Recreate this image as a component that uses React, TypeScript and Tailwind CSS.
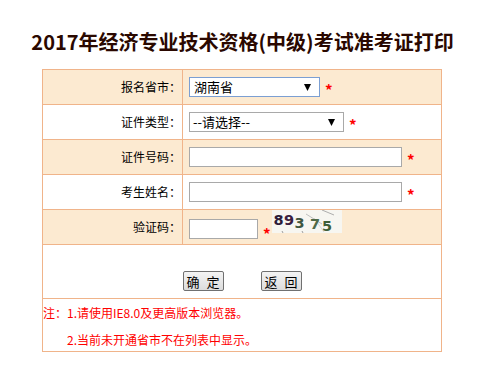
import React from "react";

const Star = ({ cls = "" }: { cls?: string }) => (
  <span className={`text-[#ff0000] text-[15px] font-bold leading-none ${cls}`}>*</span>
);

const Arrow = () => (
  <svg width="7" height="7" viewBox="0 0 7 7" className="absolute right-[8px] top-[6px]">
    <polygon points="0,0 7,0 3.5,7" fill="#000" />
  </svg>
);

const Captcha = () => (
  <svg width="70" height="23" viewBox="0 0 70 23" className="block">
    <rect width="70" height="23" fill="#f7f6f1" />
    <line x1="50" y1="0" x2="62" y2="5" stroke="#9a9a9a" strokeWidth="0.8" />
    <line x1="34" y1="4" x2="50" y2="14" stroke="#b0b0b0" strokeWidth="0.8" />
    <line x1="42" y1="8" x2="52" y2="22" stroke="#c4c4c4" strokeWidth="0.6" />
    <line x1="10" y1="21" x2="11" y2="23" stroke="#888" strokeWidth="0.8" />
    <line x1="30" y1="21" x2="31" y2="23" stroke="#888" strokeWidth="0.8" />
    <g fontFamily="'DejaVu Sans', sans-serif" fontWeight="bold" fontSize="14.5">
      <text x="1.5" y="15" fill="#2d1d3a">8</text>
      <text x="12" y="15" fill="#3a2040">9</text>
      <text x="22.5" y="18" fill="#3f5540">3</text>
      <text x="38" y="19" fill="#4f6a48">7</text>
      <text x="50" y="20.5" fill="#3e5e38">5</text>
    </g>
  </svg>
);

function Row({
  label,
  peach,
  children,
}: {
  label: string;
  peach?: boolean;
  children: React.ReactNode;
}) {
  return (
    <div
      className={`grid grid-cols-[140px_1fr] h-[35px] border-b border-[#f0b48a] ${
        peach ? "bg-[#fcead1]" : "bg-white"
      }`}
    >
      <div className="border-r border-[#f0b48a] flex items-center justify-end pr-[1px] text-[12px] text-black">
        {label}
      </div>
      <div className="flex items-center pl-[6px]">{children}</div>
    </div>
  );
}

export default function App() {
  return (
    <div className="w-[497px] h-[372px] bg-white font-['Noto_Sans_CJK_SC',sans-serif] overflow-hidden">
      <h1 className="w-[485px] mt-[28px] h-[28px] leading-[28px] text-[20px] font-bold text-[#2a0800] text-center">
        2017年经济专业技术资格(中级)考试准考证打印
      </h1>
      <div className="mt-[13px] ml-[42px] w-[400px] border border-[#f0b48a]">
        <Row label="报名省市：" peach>
          <div className="relative w-[131px] h-[20px] border border-[#7b9fd3] bg-white flex items-center pl-[4px] text-[13px] text-black">
            湖南省
            <Arrow />
          </div>
          <Star cls="ml-[5px] mt-[5px]" />
        </Row>
        <Row label="证件类型：">
          <div className="relative w-[155px] h-[20px] border border-[#a9a9a9] bg-white flex items-center pl-[3px] text-[13px] text-black">
            --请选择--
            <Arrow />
          </div>
          <Star cls="ml-[5px] mt-[5px]" />
        </Row>
        <Row label="证件号码：" peach>
          <input className="w-[213px] h-[20px] border border-[#a9a9a9] bg-white outline-none" />
          <Star cls="ml-[5px] mt-[5px]" />
        </Row>
        <Row label="考生姓名：">
          <input className="w-[213px] h-[20px] border border-[#a9a9a9] bg-white outline-none" />
          <Star cls="ml-[5px] mt-[5px]" />
        </Row>
        <div className="grid grid-cols-[140px_1fr] h-[35px] border-b border-[#f0b48a] bg-[#fcead1]">
          <div className="border-r border-[#f0b48a] flex items-center justify-end pr-[1px] text-[12px] text-black">
            验证码：
          </div>
          <div className="flex items-start pl-[6px]">
            <input className="mt-[9px] w-[69px] h-[20px] border border-[#a9a9a9] bg-white outline-none" />
            <Star cls="ml-[5px] mt-[16px]" />
            <div className="ml-[1px]">
              <Captcha />
            </div>
          </div>
        </div>
        <div className="h-[54px] border-b border-[#f0b48a] flex justify-center gap-[37px] pt-[26px]">
          <button className="w-[41px] h-[20px] border border-[#707070] rounded-[2px] bg-gradient-to-b from-[#f4f4f4] to-[#dcdcdc] text-[13px] leading-none text-black tracking-[2px] pl-[2px]">
            确 定
          </button>
          <button className="w-[41px] h-[20px] border border-[#707070] rounded-[2px] bg-gradient-to-b from-[#f4f4f4] to-[#dcdcdc] text-[13px] leading-none text-black tracking-[2px] pl-[2px]">
            返 回
          </button>
        </div>
        <div className="h-[52px] text-[12px] leading-[27px] text-[#ff0000]">
          <div>注：1.请使用IE8.0及更高版本浏览器。</div>
          <div className="pl-[24px]">2.当前未开通省市不在列表中显示。</div>
        </div>
      </div>
    </div>
  );
}
